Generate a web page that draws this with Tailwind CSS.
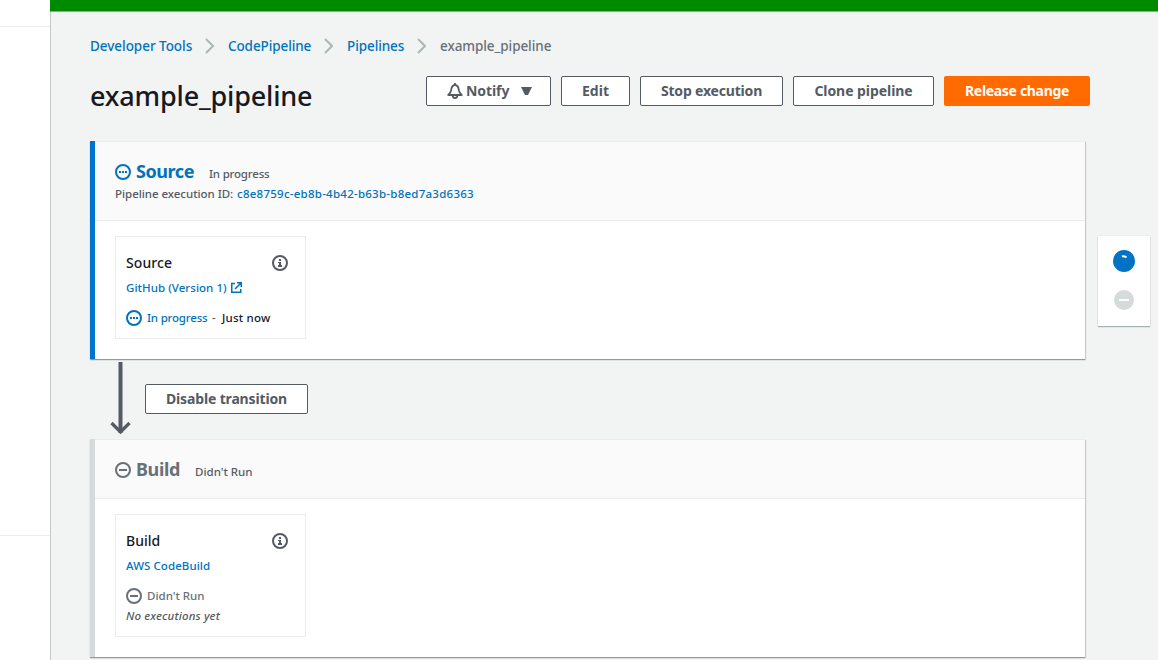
<!DOCTYPE html>
<html lang="en">
<head>
<meta charset="utf-8">
<title>example_pipeline</title>
<script src="https://cdn.jsdelivr.net/npm/@tailwindcss/browser@4"></script>
</head>
<body class="relative flex h-[660px] w-[1158px] overflow-hidden bg-[#f2f3f3] font-['Noto_Sans','Open_Sans',sans-serif] text-[11.5px] font-medium leading-5 text-[#545b64] whitespace-nowrap">
<svg class="hidden">
  <symbol id="progress" viewBox="0 0 16 16"><circle cx="8" cy="8" r="7" fill="none" stroke="currentColor" stroke-width="2"/><path d="M4 7h2v2H4zM7 7h2v2H7zM10 7h2v2h-2z" fill="currentColor"/></symbol>
  <symbol id="idle" viewBox="0 0 16 16"><circle cx="8" cy="8" r="7" fill="none" stroke="currentColor" stroke-width="2"/><path d="M4 8h8" stroke="currentColor" stroke-width="2"/></symbol>
  <symbol id="info" viewBox="0 0 16 16"><circle cx="8" cy="8" r="7" fill="none" stroke="currentColor" stroke-width="2"/><path d="M7 4h2v2H7zM6 7h3v3h1v2H6v-2h1V8H6z" fill="currentColor"/></symbol>
  <symbol id="chevron" viewBox="0 0 9 16"><path d="M1 1l7 7-7 7" fill="none" stroke="currentColor" stroke-width="2"/></symbol>
</svg>

<aside class="flex w-[50px] shrink-0 flex-col bg-white">
  <div class="h-[27px] border-b border-[#eaeded]"></div>
  <div class="h-[509px] border-b border-[#eaeded]"></div>
</aside>

<div class="flex w-[1108px] flex-col">
  <div class="h-3 shrink-0 border-b border-[#8fa59b] bg-[#008a00]"></div>
  <main class="grow border-l border-[#c0c7c7] pl-[39px] pt-6">
    <nav class="flex h-5 items-center text-[13.5px] leading-5 text-[#0073bb]">
      <a class="w-[115px] tracking-[-0.04px]">Developer Tools</a>
      <svg class="mr-[14px] h-4 w-[9px] text-[#aab7b8]"><use href="#chevron"/></svg>
      <a class="w-[96px] tracking-[-0.1px]">CodePipeline</a>
      <svg class="mr-[14px] h-4 w-[9px] text-[#aab7b8]"><use href="#chevron"/></svg>
      <a class="w-[70px] tracking-[-0.09px]">Pipelines</a>
      <svg class="mr-[14px] h-4 w-[9px] text-[#aab7b8]"><use href="#chevron"/></svg>
      <span class="tracking-[-0.08px] text-[#687078]">example_pipeline</span>
    </nav>

    <header class="mt-5 flex h-[30px] w-[1000px] items-center text-sm font-bold">
      <h1 class="mr-auto mt-[10px] text-[27px] font-medium leading-9 tracking-[-0.17px] text-[#16191f]">example_pipeline</h1>
      <div class="flex gap-[10px]">
        <button class="flex h-[30px] w-[125px] items-center rounded-xs border border-[#545b64] bg-white pl-5">
          <svg class="mr-[3px] h-4 w-4" viewBox="0 0 16 16" fill="none" stroke="currentColor" stroke-width="1.8" stroke-linejoin="round"><path d="M8 0v2M1.200 12h13.600c-2-1.400-2.600-2.600-2.900-4.600C11.500 4 10.300 2 8 2S4.500 4 4.100 7.400C3.800 9.400 3.200 10.600 1.200 12z"/><path d="M5.700 12.500c0 3.300 4.600 3.300 4.600 0"/></svg>
          <span class="w-[55px] text-left tracking-[-0.08px]">Notify</span>
          <svg class="h-2 w-[11px]" viewBox="0 0 11 8"><path d="M0 0h11L7 8H4z" fill="currentColor"/></svg>
        </button>
        <button class="h-[30px] w-[69px] rounded-xs border border-[#545b64] bg-white">Edit</button>
        <button class="h-[30px] w-[143px] rounded-xs border border-[#545b64] bg-white tracking-[-0.18px]">Stop execution</button>
        <button class="h-[30px] w-[141px] rounded-xs border border-[#545b64] bg-white tracking-[-0.06px]">Clone pipeline</button>
        <button class="h-[30px] w-[146px] rounded-xs bg-[#ff6b00] tracking-[-0.32px] text-white">Release change</button>
      </div>
    </header>

    <section class="mt-[35px] h-[218px] w-[995px] border-l-[5px] border-[#0073cc] bg-white shadow-[0_1px_1px_0_rgba(0,28,36,0.3),1px_1px_1px_0_rgba(0,28,36,0.15)]">
      <div class="h-20 border-y border-[#eaeded] bg-[#fafafa] pl-5 pt-[19px]">
        <div class="flex h-[22px] items-baseline">
          <svg class="mr-[5px] h-4 w-4 self-center text-[#0073bb]"><use href="#progress"/></svg>
          <h2 class="w-[73px] text-lg font-bold leading-[21px] tracking-[-0.43px] text-[#0073bb]">Source</h2>
          <span class="tracking-[-0.2px]">In progress</span>
        </div>
        <div class="mt-px flex">
          <span class="w-[122px] tracking-[-0.04px]">Pipeline execution ID:</span>
          <a class="tracking-[0.25px] text-[#0073bb]">c8e8759c-eb8b-4b42-b63b-b8ed7a3d6363</a>
        </div>
      </div>
      <div class="ml-5 mt-[15px] h-[103px] w-[191px] border border-[#eaeded] px-[10px] pt-4">
        <div class="flex h-5 items-center justify-between pr-[7px]">
          <h3 class="text-sm leading-5 tracking-[0.1px] text-[#16191f]">Source</h3>
          <svg class="h-4 w-4"><use href="#info"/></svg>
        </div>
        <div class="mt-[5px] flex items-center text-[#0073bb]">
          <a class="w-[105px] tracking-[0.05px]">GitHub (Version 1)</a>
          <svg class="mb-[2px] h-[11px] w-[11px]" viewBox="0 0 11 11" fill="none" stroke="currentColor" stroke-width="1.500"><path d="M4 1.500H.75v8.750h9V7M6 .75h4.250V5M10 1L4 7"/></svg>
        </div>
        <div class="mt-[10px] flex items-center">
          <svg class="mr-[5px] h-4 w-4 text-[#0073bb]"><use href="#progress"/></svg>
          <a class="w-[65px] tracking-[-0.2px] text-[#0073bb]">In progress</a>
          <span class="w-[10px]">-</span>
          <span class="tracking-[0.2px] text-[#16191f]">Just now</span>
        </div>
      </div>
    </section>

    <div class="flex h-20 pl-5 pt-[3px]">
      <svg class="mr-[14px] h-[74px] w-[21px]" viewBox="0 0 21 74" fill="none" stroke="#545b64"><path d="M10.500 0v71" stroke-width="4"/><path d="M1.500 61l9 9 9-9" stroke-width="3.200"/></svg>
      <button class="mt-[22px] h-[30px] w-[163px] rounded-xs border border-[#545b64] bg-white text-sm font-bold tracking-[-0.15px]">Disable transition</button>
    </div>

    <section class="h-[218px] w-[995px] border-l-[5px] border-[#d5dbdb] bg-white shadow-[0_1px_1px_0_rgba(0,28,36,0.3),1px_1px_1px_0_rgba(0,28,36,0.15)]">
      <div class="h-[60px] border-y border-[#eaeded] bg-[#fafafa] pl-5 pt-[19px]">
        <div class="flex h-[22px] items-baseline">
          <svg class="mr-[5px] h-4 w-4 self-center text-[#687078]"><use href="#idle"/></svg>
          <h2 class="w-[59px] text-lg font-bold leading-[21px] tracking-[-0.36px] text-[#687078]">Build</h2>
          <span>Didn't Run</span>
        </div>
      </div>
      <div class="ml-5 mt-[15px] h-[123px] w-[191px] border border-[#eaeded] px-[10px] pt-4">
        <div class="flex h-5 items-center justify-between pr-[7px]">
          <h3 class="text-sm leading-5 text-[#16191f]">Build</h3>
          <svg class="h-4 w-4"><use href="#info"/></svg>
        </div>
        <a class="mt-[5px] block tracking-[0.07px] text-[#0073bb]">AWS CodeBuild</a>
        <div class="mt-[10px] flex items-center text-[#687078]">
          <svg class="mr-[5px] h-4 w-4"><use href="#idle"/></svg>
          <span>Didn't Run</span>
        </div>
        <p class="italic tracking-[0.15px]">No executions yet</p>
      </div>
    </section>
  </main>
</div>

<!-- Floating stage navigator -->
<div class="absolute left-[1098px] top-[236px] flex h-[90px] w-[52px] flex-col items-center gap-[7px] bg-white pt-[14px] shadow-[0_1px_1px_0_rgba(0,28,36,0.3),0_0_1px_0_rgba(0,28,36,0.12)]">
  <svg class="h-[22px] w-[22px]" viewBox="0 0 22 22"><circle cx="11" cy="11" r="11" fill="#0073c4"/><path d="M9 6.500q2-.6 4.500.8" stroke="#fff" stroke-width="2" fill="none"/></svg>
  <svg class="mt-[11px] h-5 w-5" viewBox="0 0 20 20"><circle cx="10" cy="10" r="10" fill="#d5dbdb"/><path d="M5 10h10" stroke="#fff" stroke-width="1.800"/></svg>
</div>
</body>
</html>
